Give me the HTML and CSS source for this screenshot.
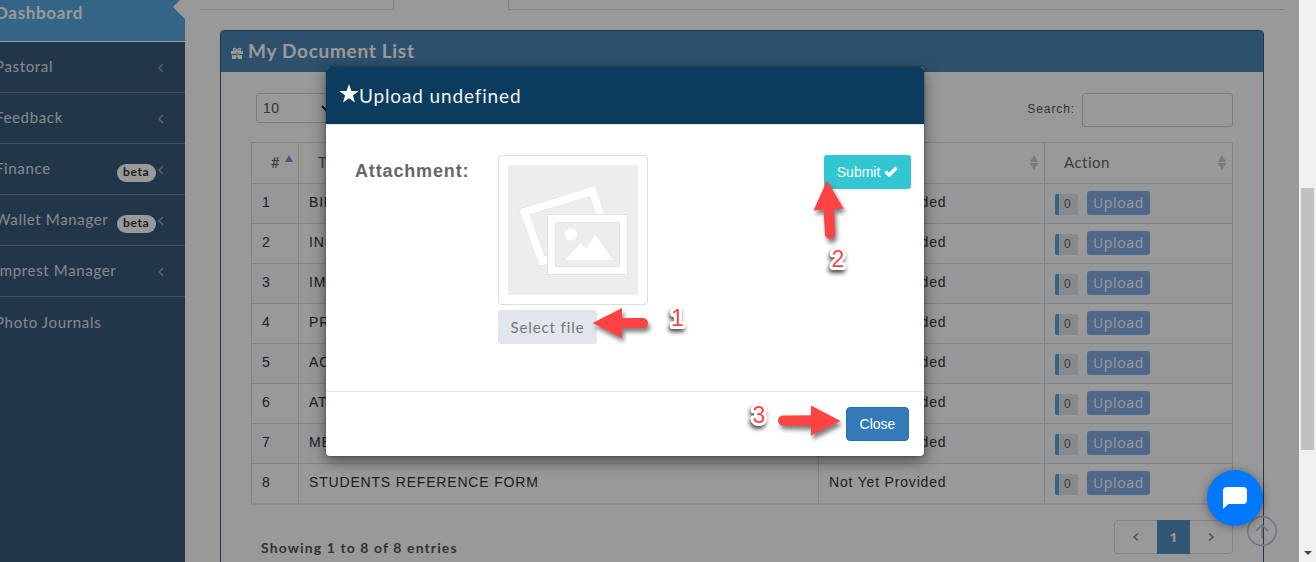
FILE: index.html
```
<!DOCTYPE html>
<html lang="en">
<head>
    <meta charset="utf-8">
    <title>My Document List</title>
    <link rel="stylesheet" href="styles.css">
</head>
<body>
    <div class="page">
        <!-- Sidebar -->
        <ul class="sidebar">
            <li class="active"><span class="title">Dashboard</span></li>
            <li><span class="title">Pastoral</span><svg class="arrow" viewBox="0 0 8 10"><path d="M6 1L2 5l4 4"/></svg></li>
            <li><span class="title">Feedback</span><svg class="arrow" viewBox="0 0 8 10"><path d="M6 1L2 5l4 4"/></svg></li>
            <li><span class="title">Finance</span><span class="badge">beta</span><svg class="arrow" viewBox="0 0 8 10"><path d="M6 1L2 5l4 4"/></svg></li>
            <li><span class="title">Wallet Manager</span><span class="badge">beta</span><svg class="arrow" viewBox="0 0 8 10"><path d="M6 1L2 5l4 4"/></svg></li>
            <li><span class="title">Imprest Manager</span><svg class="arrow" viewBox="0 0 8 10"><path d="M6 1L2 5l4 4"/></svg></li>
            <li><span class="title">Photo Journals</span></li>
        </ul>

        <div class="content">
            <div class="tabs"><span class="tab-left"></span><span class="tab-active"></span><span class="tab-rest"></span></div>

            <div class="portlet">
                <div class="portlet-title">
                    <svg class="gift" viewBox="0 0 12 12"><path d="M0 4h5v3H0zM7 4h5v3H7zM1 8h4v4H1zM7 8h4v4H7zM5.4 4h1.2v7H5.4z"/><path class="bow" d="M6 4C4 4 2.300 3.500 2.300 2.200S4.800.6 6 4c1.200-3.400 3.700-3.100 3.700-1.800S8 4 6 4z"/></svg>
                    <span>My Document List</span>
                </div>
                <div class="portlet-body">
                    <div class="toolbar">
                        <div class="length">10<svg viewBox="0 0 10 7"><path d="M1 1l4 4 4-4"/></svg></div>
                        <label class="search">Search: <input type="text"></label>
                    </div>

                    <table>
                        <thead>
                            <tr>
                                <th class="c-num"><span>#</span><i class="up"></i></th>
                                <th class="c-title"><span>Title</span><i class="sort"></i></th>
                                <th class="c-status"><span>Status</span><i class="sort"></i></th>
                                <th class="c-action"><span>Action</span><i class="sort"></i></th>
                            </tr>
                        </thead>
                        <tbody>
                            <tr><td>1</td><td>BIRTH CERTIFICATE</td><td>Not Yet Provided</td><td><div class="acts"><span class="count">0</span><a class="upload">Upload</a></div></td></tr>
                            <tr><td>2</td><td>INSURANCE</td><td>Not Yet Provided</td><td><div class="acts"><span class="count">0</span><a class="upload">Upload</a></div></td></tr>
                            <tr><td>3</td><td>IMMUNIZATION</td><td>Not Yet Provided</td><td><div class="acts"><span class="count">0</span><a class="upload">Upload</a></div></td></tr>
                            <tr><td>4</td><td>PREVIOUS REPORT</td><td>Not Yet Provided</td><td><div class="acts"><span class="count">0</span><a class="upload">Upload</a></div></td></tr>
                            <tr><td>5</td><td>ACCEPTANCE FORM</td><td>Not Yet Provided</td><td><div class="acts"><span class="count">0</span><a class="upload">Upload</a></div></td></tr>
                            <tr><td>6</td><td>ATTESTATION</td><td>Not Yet Provided</td><td><div class="acts"><span class="count">0</span><a class="upload">Upload</a></div></td></tr>
                            <tr><td>7</td><td>MEDICAL FORM</td><td>Not Yet Provided</td><td><div class="acts"><span class="count">0</span><a class="upload">Upload</a></div></td></tr>
                            <tr><td>8</td><td>STUDENTS REFERENCE FORM</td><td>Not Yet Provided</td><td><div class="acts"><span class="count">0</span><a class="upload">Upload</a></div></td></tr>
                        </tbody>
                    </table>

                    <div class="table-footer">
                        <span class="info">Showing 1 to 8 of 8 entries</span>
                        <div class="pagination">
                            <a><svg viewBox="0 0 8 10"><path d="M6 1.500L2 5l4 3.500"/></svg></a>
                            <a class="current">1</a>
                            <a><svg viewBox="0 0 8 10"><path d="M2 1.500L6 5 2 8.500"/></svg></a>
                        </div>
                    </div>
                </div>
            </div>
        </div>

        <svg class="to-top" viewBox="0 0 32 32"><circle cx="16" cy="16" r="14.300"/><path d="M16 23V10M10 16l6-6 6 6"/></svg>
    </div>

    <!-- Upload dialog -->
    <div class="backdrop">
        <div class="modal">
            <div class="modal-header">
                <svg viewBox="0 0 20 19"><path d="M10 0l2.400 6.900 7.300.1-5.800 4.400 2.100 7L10 14.200 4 18.400l2.100-7L.3 7l7.300-.1z"/></svg>
                <span>Upload undefined</span>
            </div>
            <div class="modal-body">
                <label class="attachment">Attachment:</label>
                <div class="fileinput">
                    <div class="thumbnail">
                        <svg viewBox="0 0 130 130">
                            <rect width="130" height="130" fill="#ededed"/>
                            <path d="M16.500 47L84.500 26l18 56-68.500 14z" fill="none" stroke="#dfdfdf" stroke-width="9"/>
                            <path d="M16.500 47L84.500 26l18 56-68.500 14z" fill="none" stroke="#fff" stroke-width="8"/>
                            <path d="M39.500 49.500h80v60h-80z" fill="#fff" stroke="#e2e2e2"/>
                            <path d="M47.500 57.500h64v44h-64z" fill="#ededed" stroke="#e2e2e2"/>
                            <circle cx="63" cy="69.500" r="6" fill="#fff"/>
                            <path d="M57 95L72.500 78l5.500 5.500 9.500-13.500L104.500 95z" fill="#fff"/>
                        </svg>
                    </div>
                    <button class="select-file">Select file</button>
                </div>
                <button class="submit">Submit <svg viewBox="0 0 14 11"><path d="M1.500 5.500l3.700 3.600L12.500 1.800"/></svg></button>
            </div>
            <div class="modal-footer"><button class="close">Close</button></div>
        </div>
    </div>

    <!-- Chat launcher -->
    <div class="chat"><svg viewBox="0 0 24 22"><path d="M4 0h16q4 0 4 4v9q0 4-4 4H5.500L0 22V4q0-4 4-4z"/></svg></div>

    <!-- Step markers -->
    <svg class="steps" viewBox="0 0 1316 562">
        <g class="arrows">
            <path d="M592.500 323L622 308v10h21a5 5 0 0 1 0 10h-21v10z"/>
            <path d="M827 180.500L843.500 208.500l-9.500.6 1 24.500a5 5 0 0 1-10 .6l-1.500-24.500-10 .8z"/>
            <path d="M840.500 421L811 435.500V426l-28-.6a5 5 0 0 1 0-10l28-.1v-9.800z"/>
        </g>
        <g class="digits">
            <text x="671" y="326">1</text>
            <text x="831.500" y="267">2</text>
            <text x="752.500" y="423">3</text>
        </g>
    </svg>

    <div class="scrollbar"><span class="thumb"></span><span class="down"></span></div>
</body>
</html>
```
FILE: styles.css
```
* {
    box-sizing: border-box;
}
body {
    margin: 0;
    height: 562px;
    overflow: hidden;
    background: #fff;
    font-family: "Liberation Sans", Arial, sans-serif;
    font-size: 14px;
    color: #333;
}
button {
    border: 0;
    padding: 0;
    font-family: inherit;
}
.page {
    display: flex;
    width: 1299px;
    height: 562px;
    overflow: hidden;
    position: relative;
}

/* Sidebar */
.sidebar {
    list-style: none;
    margin: 0;
    padding: 0;
    width: 185px;
    flex: none;
    background: #375a7a;
    font-family: Lato, sans-serif;
    font-size: 15px;
    letter-spacing: 0.65px;
    color: #dfe3e7;
}
.sidebar li {
    display: flex;
    align-items: center;
    height: 51px;
    border-bottom: 1px solid #6b8497;
    padding-right: 20px;
    position: relative;
}
.sidebar li:last-child {
    border: 0;
}
.sidebar .title {
    flex: 1;
    margin-left: -5px;
    padding-bottom: 2px;
    white-space: nowrap;
}
.sidebar .active {
    height: 42px;
    padding-bottom: 15px;
    background: #59a9df;
    border-color: #fff;
    font-size: 17px;
    font-weight: bold;
    color: #fff;
}
.sidebar .active::after {
    content: '';
    position: absolute;
    right: 0;
    top: -5px;
    border: 12px solid transparent;
    border-left: 0;
    border-right-color: #fff;
}
.arrow {
    width: 8px;
    height: 10px;
    margin-top: 2px;
    fill: none;
    stroke: #8fa4b3;
    stroke-width: 1.6;
}
.badge {
    background: #fff;
    color: #333;
    border-radius: 9px;
    height: 18px;
    line-height: 16px;
    padding: 0 6px;
    margin: 7px 1px 0 0;
    width: 39px;
    font-size: 12px;
    font-weight: bold;
    white-space: nowrap;
}

/* Portlet */
.content {
    flex: 1;
    padding: 0 35px;
}
.tabs {
    display: flex;
    height: 10px;
    margin: 0 -20px 20px;
}
.tab-left {
    width: 194px;
    border-bottom: 1px solid #ddd;
    border-right: 1px solid #ddd;
}
.tab-active {
    width: 114px;
}
.tab-rest {
    flex: 1;
    border-left: 1px solid #ddd;
    border-bottom: 1px solid #ddd;
}
.portlet {
    border: 1px solid #375a7a;
    border-radius: 4px 4px 0 0;
    height: 560px;
    width: 1044px;
}
.portlet-title {
    display: flex;
    align-items: center;
    gap: 5px;
    height: 41px;
    padding: 0 0 3px 10px;
    background: #4b85b5;
    color: #fff;
    font-family: Lato, sans-serif;
    font-size: 19px;
    font-weight: bold;
    letter-spacing: 0.7px;
}
.gift {
    width: 12px;
    height: 12px;
    margin-top: 5px;
    fill: #fff;
}
.gift .bow {
    fill: none;
    stroke: #fff;
    stroke-width: 1.2;
}
.portlet-body {
    padding: 21px 30px 0;
}
.toolbar {
    display: flex;
    justify-content: space-between;
    height: 49px;
    padding-left: 5px;
}
.length {
    display: flex;
    align-items: center;
    justify-content: space-between;
    width: 80px;
    height: 30px;
    padding: 0 4px 0 6px;
    border: 1px solid #d0d0d0;
    border-radius: 3px;
    color: #555;
    letter-spacing: 0.5px;
}
.length svg {
    width: 10px;
    fill: none;
    stroke: #333;
    stroke-width: 2;
}
.search {
    display: flex;
    align-items: center;
    gap: 7px;
    height: 34px;
    padding-bottom: 2px;
    font-size: 12px;
    letter-spacing: 0.9px;
    color: #555;
}
.search input {
    width: 151px;
    height: 34px;
    margin-top: 2px;
    background: #fff;
    border: 1px solid #d0d0d0;
    border-radius: 3px;
}
table {
    border-collapse: collapse;
    table-layout: fixed;
    width: 982px;
    border: 1px solid #e7ecf1;
    border-bottom: 2px solid #eceaf4;
    letter-spacing: 0.82px;
}
th,
td {
    border: 1px solid #ddd;
    padding: 0 10px;
    height: 40px;
    text-align: left;
    white-space: nowrap;
}
th {
    position: relative;
    height: 41px;
    padding: 0 0 3px 19px;
    font-family: Lato, sans-serif;
    font-size: 15px;
    font-weight: normal;
    letter-spacing: 0.5px;
    color: #666;
}
td {
    padding-bottom: 3px;
}
tbody tr:nth-child(odd) {
    background: #fbfcfd;
}
.c-num {
    width: 47px;
}
.c-title {
    width: 520px;
}
.c-status {
    width: 226px;
}
.c-action {
    width: 188px;
}
.up {
    position: absolute;
    right: 5px;
    top: 12px;
    border: 4px solid transparent;
    border-top: 0;
    border-bottom: 7px solid #8e8bd8;
}
.sort::before,
.sort::after {
    content: '';
    position: absolute;
    right: 6px;
    top: 12px;
    border: 4px solid transparent;
    border-top: 0;
    border-bottom: 7px solid #ccc;
}
.sort::after {
    top: 20px;
    border-top: 7px solid #ccc;
    border-bottom: 0;
}
.acts {
    display: flex;
    align-items: flex-end;
    gap: 9px;
    height: 24px;
    margin-top: 2px;
}
.count {
    width: 23px;
    height: 21px;
    line-height: 20px;
    padding-left: 5px;
    background: #e1e5ec;
    border-left: 4px solid #59a9df;
    border-radius: 2px;
    font-size: 12px;
    color: #666;
}
.upload {
    width: 63px;
    height: 24px;
    line-height: 23px;
    background: #84ade6;
    border-radius: 3px;
    color: #fff;
    font-family: "Open Sans", sans-serif;
    font-size: 14px;
    letter-spacing: 0.65px;
    text-align: center;
}
.table-footer {
    display: flex;
    justify-content: space-between;
    padding: 15px 0 0 10px;
}
.info {
    padding-top: 19px;
    font-family: Lato, sans-serif;
    font-weight: bold;
    letter-spacing: 1.1px;
    color: #555;
}
.pagination {
    display: flex;
    width: 119px;
    height: 34px;
    border: 1px solid #ddd;
    border-radius: 4px;
}
.pagination a {
    flex: 1;
    display: flex;
    align-items: center;
    justify-content: center;
}
.pagination svg {
    width: 8px;
    height: 10px;
    fill: none;
    stroke: #888;
    stroke-width: 1.5;
}
.pagination .current {
    flex: none;
    width: 33px;
    margin: -1px 0;
    background: #5391c3;
    color: #fff;
    font-family: "Open Sans", sans-serif;
    font-size: 13px;
    font-weight: bold;
}
.to-top {
    position: absolute;
    left: 1246px;
    top: 515px;
    width: 32px;
    height: 32px;
    fill: none;
    stroke: #bcc9dd;
    stroke-width: 1.7;
}

/* Dialog */
.backdrop {
    position: absolute;
    top: 0;
    left: 0;
    width: 1299px;
    height: 562px;
    padding: 67px 0 0 326px;
    background: rgba(0, 0, 0, 0.4);
}
.modal {
    width: 598px;
    height: 389px;
    background: #fff;
    border-radius: 4px;
    box-shadow: 0 5px 15px rgba(0, 0, 0, 0.5), 0 0 2px rgba(0, 0, 0, 0.5);
}
.modal-header {
    display: flex;
    align-items: center;
    height: 58px;
    padding-left: 13px;
    background: #0b3b5d;
    border-bottom: 1px solid #e5e5e5;
    border-radius: 4px 4px 0 0;
    color: #f0f3f6;
    font-family: Lato, sans-serif;
    font-size: 19px;
    letter-spacing: 0.85px;
}
.modal-header svg {
    width: 20px;
    height: 19px;
    margin-top: -5px;
    fill: #fff;
}
.modal-body {
    display: flex;
    align-items: flex-start;
    height: 266px;
    padding: 30px 13px 0 29px;
}
.attachment {
    width: 143px;
    padding-top: 6px;
    font-size: 18px;
    font-weight: bold;
    letter-spacing: 0.85px;
    color: #666;
}
.fileinput {
    flex: 1;
}
.thumbnail {
    width: 150px;
    height: 150px;
    padding: 9px;
    margin-bottom: 5px;
    border: 1px solid #ddd;
    border-radius: 4px;
}
.thumbnail svg {
    display: block;
    width: 130px;
    height: 130px;
}
.select-file {
    display: block;
    width: 99px;
    height: 34px;
    padding-bottom: 1px;
    background: #e1e5ec;
    border-radius: 3px;
    color: #777;
    font-family: Lato, sans-serif;
    font-size: 15px;
    letter-spacing: 0.9px;
}
.submit {
    width: 87px;
    height: 34px;
    background: #32c5d2;
    border-radius: 3px;
    color: #fff;
    font-size: 14px;
}
.submit svg {
    width: 14px;
    height: 11px;
    fill: none;
    stroke: #fff;
    stroke-width: 3.4;
}
.modal-footer {
    display: flex;
    justify-content: flex-end;
    padding: 15px;
    border-top: 1px solid #e5e5e5;
}
.close {
    width: 63px;
    height: 34px;
    background: #337ab7;
    border: 1px solid #2e6da4;
    border-radius: 4px;
    color: #fff;
    font-size: 14px;
}

/* Overlays */
.chat {
    position: absolute;
    left: 1207px;
    top: 470px;
    width: 56px;
    height: 56px;
    display: flex;
    align-items: center;
    justify-content: center;
    background: #0077ff;
    border-radius: 50%;
    box-shadow: 0 1px 10px rgba(0, 0, 0, 0.4);
}
.chat svg {
    width: 24px;
    height: 22px;
    fill: #fff;
}
.steps {
    position: absolute;
    top: 0;
    left: 0;
    width: 1316px;
    height: 562px;
}
.arrows {
    fill: #ff4343;
    filter: drop-shadow(2px 4px 2px rgba(0, 0, 0, 0.5));
}
.digits {
    font-size: 23px;
    fill: #ff4343;
    stroke: #fff;
    stroke-width: 6px;
    stroke-linejoin: round;
    paint-order: stroke;
    filter: drop-shadow(-1px 3px 2px rgba(0, 0, 0, 0.7));
}
.scrollbar {
    position: absolute;
    top: 0;
    right: 0;
    width: 17px;
    height: 562px;
    background: #f0f0f0;
    display: flex;
    flex-direction: column;
    align-items: center;
    justify-content: space-between;
    padding: 188px 0 7px;
}
.thumb {
    width: 13px;
    height: 262px;
    background: #c1c1c1;
}
.down {
    border: 4px solid transparent;
    border-top-color: #444;
    border-bottom: 0;
}
```
